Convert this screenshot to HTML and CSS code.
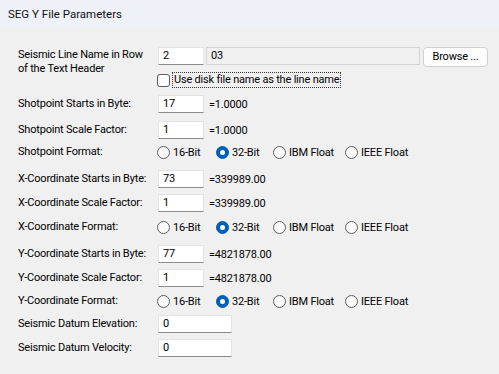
FILE: index.html
```html
<!DOCTYPE html>
<html>
<head>
<meta charset="utf-8">
<link rel="stylesheet" href="styles.css">
</head>
<body>
<div class="header">SEG Y File Parameters</div>
<div class="form">
  <div class="row r-first">
    <div class="label two">Seismic Line Name in Row<br>of the Text Header</div>
    <div class="input short">2</div>
    <div class="input wide ro">03</div>
    <div class="button">Browse ...</div>
  </div>
  <div class="row g6">
    <div class="label"></div>
    <span class="check"></span>
    <span class="focus">Use disk file name as the line name</span>
  </div>
  <div class="row g6">
    <div class="label">Shotpoint Starts in Byte:</div>
    <div class="input short">17</div>
    <span class="value">=1.0000</span>
  </div>
  <div class="row g8">
    <div class="label">Shotpoint Scale Factor:</div>
    <div class="input short">1</div>
    <span class="value">=1.0000</span>
  </div>
  <div class="row g4">
    <div class="label">Shotpoint Format:</div>
    <div class="radios">
      <span class="radio w16"><i class="dot"></i>16-Bit</span>
      <span class="radio w32"><i class="dot on"></i>32-Bit</span>
      <span class="radio wibm"><i class="dot"></i>IBM Float</span>
      <span class="radio"><i class="dot"></i>IEEE Float</span>
    </div>
  </div>
  <div class="row g9">
    <div class="label">X-Coordinate Starts in Byte:</div>
    <div class="input short">73</div>
    <span class="value">=339989.00</span>
  </div>
  <div class="row g6">
    <div class="label">X-Coordinate Scale Factor:</div>
    <div class="input short">1</div>
    <span class="value">=339989.00</span>
  </div>
  <div class="row g6">
    <div class="label">X-Coordinate Format:</div>
    <div class="radios">
      <span class="radio w16"><i class="dot"></i>16-Bit</span>
      <span class="radio w32"><i class="dot on"></i>32-Bit</span>
      <span class="radio wibm"><i class="dot"></i>IBM Float</span>
      <span class="radio"><i class="dot"></i>IEEE Float</span>
    </div>
  </div>
  <div class="row g9">
    <div class="label">Y-Coordinate Starts in Byte:</div>
    <div class="input short">77</div>
    <span class="value">=4821878.00</span>
  </div>
  <div class="row g6">
    <div class="label">Y-Coordinate Scale Factor:</div>
    <div class="input short">1</div>
    <span class="value">=4821878.00</span>
  </div>
  <div class="row g5">
    <div class="label">Y-Coordinate Format:</div>
    <div class="radios">
      <span class="radio w16"><i class="dot"></i>16-Bit</span>
      <span class="radio w32"><i class="dot on"></i>32-Bit</span>
      <span class="radio wibm"><i class="dot"></i>IBM Float</span>
      <span class="radio"><i class="dot"></i>IEEE Float</span>
    </div>
  </div>
  <div class="row g5">
    <div class="label">Seismic Datum Elevation:</div>
    <div class="input mid">0</div>
  </div>
  <div class="row g6">
    <div class="label">Seismic Datum Velocity:</div>
    <div class="input mid">0</div>
  </div>
</div>
</body>
</html>
```
FILE: styles.css
```css
html, body {
  margin: 0;
  padding: 0;
}
body {
  width: 499px;
  height: 374px;
  overflow: hidden;
  background: #f0f0f0;
  font-family: Roboto, "Liberation Sans", Arial, sans-serif;
  font-size: 11px;
  letter-spacing: -0.2px;
  color: #000;
}
.header {
  height: 28px;
  box-sizing: border-box;
  background: #eef2f8;
  padding: 6px 0 0 8px;
  font-size: 11.5px;
  letter-spacing: 0;
  line-height: 16px;
  color: #111;
}
.form {
  display: flex;
  flex-direction: column;
  padding-left: 18px;
}
.row {
  display: flex;
  align-items: center;
  height: 18px;
}
.r-first { margin-top: 19px; align-items: flex-start; }
.g4 { margin-top: 4px; }
.g5 { margin-top: 5px; }
.g6 { margin-top: 6px; }
.g8 { margin-top: 8px; }
.g9 { margin-top: 9px; }
.label {
  width: 140px;
  flex: none;
  line-height: 14px;
  white-space: nowrap;
}
.label.two { padding-top: 1px; }
.input {
  box-sizing: border-box;
  height: 18px;
  background: #fff;
  border: 1px solid #e3e3e3;
  border-bottom-color: #8c8c8c;
  padding: 0 4px;
  line-height: 16px;
  flex: none;
}
.short { width: 46px; }
.mid { width: 74px; }
.wide {
  width: 214px;
  margin-left: 2px;
}
.ro {
  background: #f0f0f0;
  border-color: #d4d4d4;
  border-bottom-color: #d4d4d4;
}
.button {
  box-sizing: border-box;
  margin-left: 3px;
  width: 65px;
  height: 20px;
  background: #fdfdfd;
  border: 1px solid #d0d0d0;
  border-radius: 4px;
  text-align: center;
  line-height: 18px;
}
.value {
  margin-left: 5px;
}
.check {
  box-sizing: border-box;
  width: 13px;
  height: 13px;
  border: 1px solid #5c5c5c;
  border-radius: 3px;
  background: #fbfbfb;
  margin-left: -1px;
  flex: none;
}
.focus {
  margin-left: 2px;
  border: 1px dotted #333;
  padding: 0 1px;
  line-height: 14px;
}
.radios {
  display: flex;
  align-items: center;
  margin-left: -1px;
}
.radio {
  display: flex;
  align-items: center;
}
.w16 { width: 59px; }
.w32 { width: 57px; }
.wibm { width: 72px; }
.dot {
  box-sizing: border-box;
  width: 13px;
  height: 13px;
  border: 1px solid #5c5c5c;
  border-radius: 50%;
  background: #fbfbfb;
  margin-right: 3px;
  flex: none;
  position: relative;
}
.dot.on {
  background: #005fb8;
  border-color: #005fb8;
}
.dot.on::after {
  content: "";
  position: absolute;
  left: 3px;
  top: 3px;
  width: 5px;
  height: 5px;
  border-radius: 50%;
  background: #fff;
}
```
